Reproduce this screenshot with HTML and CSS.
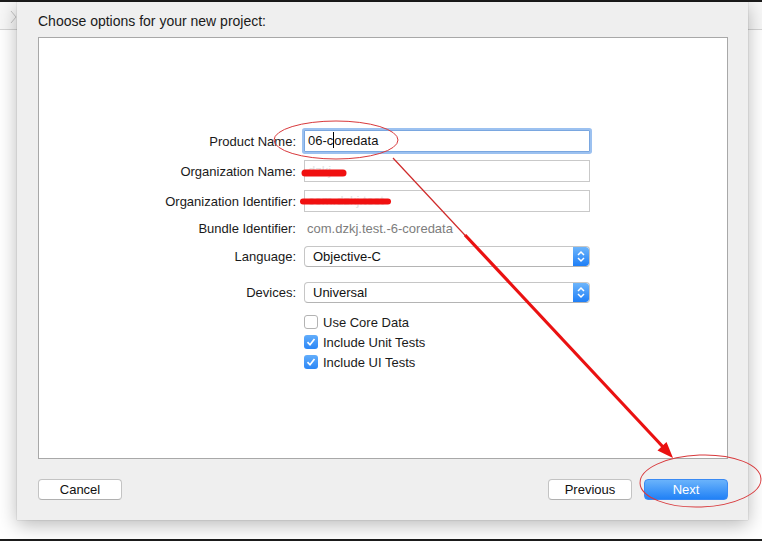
FILE: index.html
```html
<!DOCTYPE html>
<html>
<head>
<meta charset="utf-8">
<link rel="stylesheet" href="styles.css">
</head>
<body>
<div class="page">
  <div class="window">
    <div class="toolbar">
      <svg class="chev" width="10" height="16" viewBox="0 0 10 16"><polyline points="1,1 6,7 1,13" fill="none" stroke="#c4c4c4" stroke-width="1"/></svg>
    </div>
    <div class="sheet">
      <div class="title">Choose options for your new project:</div>
      <div class="panel">
        <div class="form">
          <div class="row">
            <div class="label">Product Name:</div>
            <div class="field focused">06-c<span class="caret"></span>oredata</div>
          </div>
          <div class="row">
            <div class="label">Organization Name:</div>
            <div class="field"><span class="hidden-text">dzkj</span></div>
          </div>
          <div class="row">
            <div class="label">Organization Identifier:</div>
            <div class="field"><span class="hidden-text">com.dzkj.test</span></div>
          </div>
          <div class="row row-bundle">
            <div class="label">Bundle Identifier:</div>
            <div class="value">com.dzkj.test.-6-coredata</div>
          </div>
          <div class="row row-lang">
            <div class="label">Language:</div>
            <div class="popup"><span class="popup-text">Objective-C</span>
              <span class="stepper"><svg width="16" height="19" viewBox="0 0 16 19"><polyline points="5,8 8,5 11,8" fill="none" stroke="#fff" stroke-width="1.5"/><polyline points="5,11 8,14 11,11" fill="none" stroke="#fff" stroke-width="1.5"/></svg></span>
            </div>
          </div>
          <div class="row row-dev">
            <div class="label">Devices:</div>
            <div class="popup"><span class="popup-text">Universal</span>
              <span class="stepper"><svg width="16" height="19" viewBox="0 0 16 19"><polyline points="5,8 8,5 11,8" fill="none" stroke="#fff" stroke-width="1.5"/><polyline points="5,11 8,14 11,11" fill="none" stroke="#fff" stroke-width="1.5"/></svg></span>
            </div>
          </div>
          <div class="checks">
            <div class="check"><span class="box"></span><span>Use Core Data</span></div>
            <div class="check"><span class="box on"><svg width="14" height="14" viewBox="0 0 14 14"><polyline points="3.5,7.2 6,9.8 10.5,4" fill="none" stroke="#fff" stroke-width="1.7"/></svg></span><span>Include Unit Tests</span></div>
            <div class="check"><span class="box on"><svg width="14" height="14" viewBox="0 0 14 14"><polyline points="3.5,7.2 6,9.8 10.5,4" fill="none" stroke="#fff" stroke-width="1.7"/></svg></span><span>Include UI Tests</span></div>
          </div>
        </div>
      </div>
      <div class="buttons">
        <div class="btn">Cancel</div>
        <div class="spacer"></div>
        <div class="btn">Previous</div>
        <div class="btn primary">Next</div>
      </div>
    </div>
  </div>
  <svg class="overlay" width="762" height="541" viewBox="0 0 762 541">
    <ellipse cx="336" cy="140" rx="62" ry="19" fill="none" stroke="#d8393c" stroke-width="1"/>
    <ellipse cx="700.5" cy="481" rx="60.5" ry="26" fill="none" stroke="#d8393c" stroke-width="1" transform="rotate(-2 700.5 481)"/>
    <line x1="305" y1="173" x2="343" y2="173" stroke="#f01010" stroke-width="7" stroke-linecap="round"/>
    <line x1="303" y1="201.5" x2="388" y2="201.5" stroke="#f01010" stroke-width="6" stroke-linecap="round"/>
    <line x1="393" y1="158" x2="475" y2="246" stroke="#cf2a2a" stroke-width="1.2"/>
    <line x1="465" y1="235" x2="664" y2="448" stroke="#ea1111" stroke-width="3.2"/>
    <polygon points="673,458 657.5,450.5 666.5,442" fill="#ea1111"/>
  </svg>
</div>
</body>
</html>
```

FILE: styles.css
```css
* { box-sizing: border-box; }
html, body { margin: 0; padding: 0; }
body {
  font-family: "Liberation Sans", Arial, sans-serif;
  font-size: 13px;
  color: #111;
  background: #fff;
}
.page {
  position: relative;
  width: 762px;
  height: 541px;
  overflow: hidden;
}
.window {
  position: relative;
  width: 762px;
  height: 541px;
  border-top: 2px solid #1c1c1c;
  border-bottom: 2px solid #1c1c1c;
  background: #fff;
}
.toolbar {
  height: 28px;
  background: #f7f7f7;
  border-bottom: 1px solid #d4d4d4;
  padding: 8px 0 0 10px;
}
.chev { display: block; }
.sheet {
  position: absolute;
  left: 17px;
  top: 0;
  width: 731px;
  height: 518px;
  background: #efefef;
  box-shadow: 0 5px 18px rgba(0, 0, 0, 0.28), 0 0 1px rgba(0,0,0,0.3);
  padding: 0 20px 0 21px;
  display: flex;
  flex-direction: column;
}
.title {
  height: 35px;
  padding-top: 11px;
  line-height: 17px;
  font-size: 14px;
  color: #1a1a1a;
}
.panel {
  height: 422px;
  background: #fff;
  border: 1px solid #a8a8a8;
}
.form {
  padding-top: 92px;
  display: flex;
  flex-direction: column;
}
.row {
  display: flex;
  align-items: center;
  height: 22px;
  margin-bottom: 8px;
}
.label {
  width: 257px;
  margin-right: 8px;
  text-align: right;
  color: #1a1a1a;
}
.field {
  width: 286px;
  height: 22px;
  border: 1px solid #c9c9c9;
  background: #fff;
  padding-left: 3px;
  line-height: 20px;
  color: #111;
  white-space: nowrap;
}
.hidden-text { color: #e2e2e2; }
.field.focused {
  border-color: #7aa7e0;
  box-shadow: 0 0 0 2px #9cc1f0;
  border-radius: 1px;
}
.caret {
  display: inline-block;
  width: 0;
  height: 16px;
  border-left: 1px solid #000;
  vertical-align: -3px;
}
.row-bundle {
  height: 16px;
  margin-bottom: 10px;
}
.value {
  padding-left: 3px;
  color: #7d7d7d;
}
.row-lang { height: 21px; margin-bottom: 15px; }
.row-dev { height: 21px; margin-bottom: 11px; }
.popup {
  width: 286px;
  height: 21px;
  border: 1px solid #c6c6c6;
  border-bottom-color: #b4b4b4;
  border-radius: 4px;
  background: #fff;
  display: flex;
  align-items: center;
  justify-content: space-between;
  overflow: hidden;
}
.popup-text { padding-left: 8px; color: #111; }
.stepper {
  width: 16px;
  height: 19px;
  background: linear-gradient(#6db5fb, #1f7ff7);
  border-radius: 0 3px 3px 0;
}
.stepper svg { display: block; }
.checks {
  display: flex;
  flex-direction: column;
  gap: 4px;
  padding-left: 265px;
}
.check {
  display: flex;
  align-items: center;
  height: 16px;
  gap: 5px;
  color: #1a1a1a;
}
.box {
  width: 14px;
  height: 14px;
  border: 1px solid #b3b3b3;
  border-radius: 3px;
  background: #fff;
}
.box.on {
  border: none;
  background: linear-gradient(#62adfb, #2b87f7);
}
.box svg { display: block; }
.buttons {
  margin-top: 20px;
  display: flex;
  gap: 12px;
}
.spacer { flex: 1; }
.btn {
  width: 84px;
  height: 21px;
  border: 1px solid #c3c3c3;
  border-bottom-color: #b0b0b0;
  border-radius: 4px;
  background: #fff;
  text-align: center;
  line-height: 19px;
  color: #111;
}
.btn.primary {
  border: 1px solid #3a8af3;
  background: linear-gradient(#6ab3fb, #2181f6);
  color: #fff;
}
.overlay {
  position: absolute;
  left: 0;
  top: 0;
  pointer-events: none;
}
```
